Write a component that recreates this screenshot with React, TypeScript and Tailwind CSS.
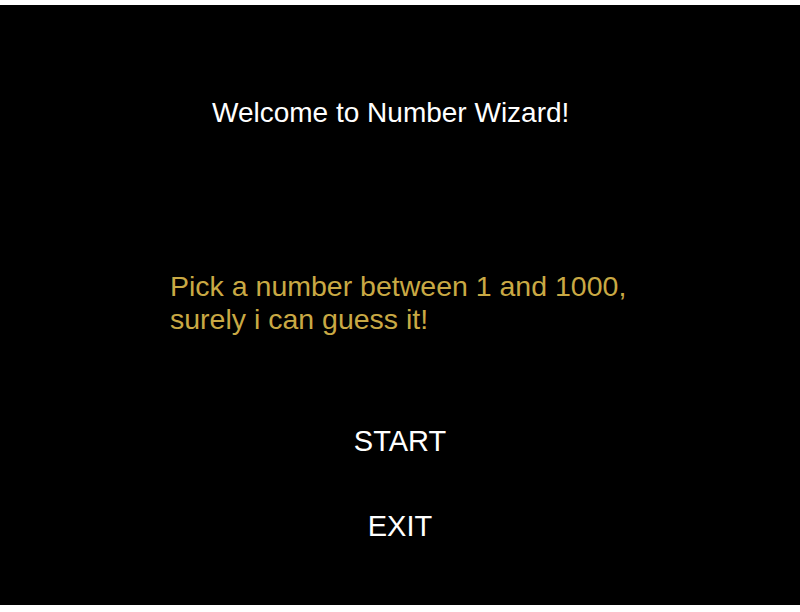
export default function App() {
  return (
    <div className="w-[800px] h-[612px] bg-white pt-[5px]" style={{ fontFamily: '"Liberation Sans", Arial, sans-serif' }}>
      <div className="h-[600px] bg-black flex flex-col">
        <h1 className="mt-[92px] pl-[212px] text-[28px] leading-[32px] text-white font-normal">
          Welcome to Number Wizard!
        </h1>
        <p className="mt-[141px] pl-[170px] text-[28.5px] leading-[32.5px] text-[#c9a944]">
          Pick a number between 1 and 1000,
          <br />
          surely i can guess it!
        </p>
        <div className="mt-[91px] flex flex-col items-center gap-[55px]">
          <button className="text-[29px] leading-[30px] text-white">START</button>
          <button className="text-[29px] leading-[30px] text-white">EXIT</button>
        </div>
      </div>
    </div>
  )
}
